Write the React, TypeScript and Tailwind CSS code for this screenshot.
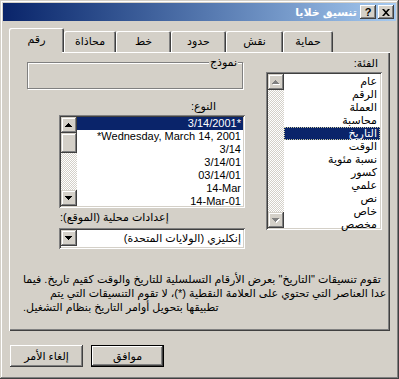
import React from "react";

function W({ t }: { t: string }) {
  const words = t.split(" ");
  return (
    <>
      {words.map((w, i) => (
        <React.Fragment key={i}>
          {i > 0 && " "}
          <span>{w}</span>
        </React.Fragment>
      ))}
    </>
  );
}

const raised =
  "shadow-[inset_-1px_-1px_#404040,inset_1px_1px_#d4d0c8,inset_-2px_-2px_#808080,inset_2px_2px_#ffffff]";
const btnRaised =
  "shadow-[inset_-1px_-1px_#404040,inset_1px_1px_#ffffff,inset_-2px_-2px_#808080,inset_2px_2px_#d4d0c8]";
const sunken =
  "shadow-[inset_1px_1px_#808080,inset_-1px_-1px_#ffffff,inset_2px_2px_#404040,inset_-2px_-2px_#d4d0c8]";
const dither =
  "bg-[repeating-conic-gradient(#d4d0c8_0%_25%,#ffffff_0%_50%)] bg-[length:2px_2px]";

function Arrow({ dir, disabled }: { dir: "up" | "down"; disabled?: boolean }) {
  const rows = dir === "up" ? [[3, 1], [2, 3], [1, 5], [0, 7]] : [[0, 7], [1, 5], [2, 3], [3, 1]];
  const shape = (fill: string, dx: number, dy: number) =>
    rows.map(([x, w], i) => <rect key={fill + i} x={x + dx} y={i + dy} width={w} height={1} fill={fill} />);
  return (
    <svg width="8" height="5" viewBox="0 0 8 5">
      {disabled && shape("#ffffff", 1, 1)}
      {shape(disabled ? "#808080" : "#000000", 0, 0)}
    </svg>
  );
}

function ScrollBtn({ dir, disabled }: { dir: "up" | "down"; disabled?: boolean }) {
  return (
    <div className={`w-[16px] h-[16px] shrink-0 bg-[#d4d0c8] flex items-center justify-center ${raised}`}>
      <Arrow dir={dir} disabled={disabled} />
    </div>
  );
}

function Tab({ label, w, selected }: { label: string; w: string; selected?: boolean }) {
  return (
    <div
      dir="rtl"
      className={`relative ${w} ${selected ? "h-[24px] pt-[5px]" : "h-[21px] pt-[4px]"} rounded-t-[2px] bg-[#d4d0c8] text-center leading-[13px] shadow-[inset_1px_1px_#ffffff,inset_-1px_0_#404040,inset_-2px_0_#808080]`}
    >
      {label}
      {selected && <div className="absolute left-[1px] right-[2px] -bottom-[2px] h-[3px] bg-[#d4d0c8]" />}
    </div>
  );
}

export default function App() {
  const cats = ["عام", "الرقم", "العملة", "محاسبة", "التاريخ", "الوقت", "نسبة مئوية", "كسور", "علمي", "نص", "خاص", "مخصص"];
  const types = ["3/14/2001*", "*Wednesday, March 14, 2001", "3/14", "3/14/01", "03/14/01", "14-Mar", "14-Mar-01"];

  return (
    <div
      className={`w-[399px] h-[379px] bg-[#d4d0c8] p-[3px] flex flex-col text-[11px] text-black font-['Liberation_Sans','DejaVu_Sans',sans-serif] ${raised}`}
    >
      {/* title bar */}
      <div className="h-[18px] shrink-0 flex items-center justify-end pr-[2px] bg-linear-to-r from-[#0a246a] to-[#a6caf0]">
        <span dir="rtl" className="text-white font-bold text-[11px] leading-[14px] mr-[3px]">
          <W t="تنسيق خلايا" />
        </span>
        <div className={`w-[16px] h-[14px] bg-[#d4d0c8] flex items-center justify-center font-bold text-[11px] leading-[11px] ${btnRaised}`}>
          ?
        </div>
        <div className={`w-[16px] h-[14px] ml-[2px] bg-[#d4d0c8] flex items-center justify-center ${btnRaised}`}>
          <svg width="8" height="7" viewBox="0 0 8 7">
            <path d="M0 0h2l2 2.3L6 0h2L5 3.5 8 7H6L4 4.7 2 7H0l3-3.5z" fill="#000" />
          </svg>
        </div>
      </div>

      {/* tabs + panel */}
      <div className="mx-[6px] mt-[7px]">
        <div className="relative z-10 flex items-end h-[24px]">
          <Tab label="رقم" w="w-[55px]" selected />
          <Tab label="محاذاة" w="w-[52px]" />
          <Tab label="خط" w="w-[55px]" />
          <Tab label="حدود" w="w-[55px]" />
          <Tab label="نقش" w="w-[57px]" />
          <Tab label="حماية" w="w-[50px]" />
        </div>
        <div className="relative h-[279px] shadow-[inset_1px_1px_#ffffff,inset_-1px_-1px_#404040,inset_-2px_-2px_#808080]">
          <div className="flex pt-[5px]">
            {/* left column */}
            <div className="ml-[18px] w-[218px] flex flex-col">
              <div className="relative mt-[5px] h-[27px] w-[216px] border border-[#808080] shadow-[inset_1px_1px_#ffffff,1px_1px_#ffffff]">
                <span dir="rtl" className="absolute -top-[7px] right-[4px] bg-[#d4d0c8] px-[1px] leading-[13px]">
                  نموذج
                </span>
              </div>
              <div dir="rtl" className="mt-[11px] h-[12px] leading-[12px] self-end mr-[29px]">
                النوع:
              </div>
              <div className={`mt-[3px] ml-[32px] w-[186px] h-[93px] bg-white p-[2px] flex ${sunken}`}>
                <div className={`w-[16px] h-full flex flex-col ${dither}`}>
                  <ScrollBtn dir="up" />
                  <div className={`w-[16px] h-[20px] bg-[#d4d0c8] ${raised}`} />
                  <div className="flex-1" />
                  <ScrollBtn dir="down" />
                </div>
                <div className="flex-1 flex flex-col">
                  {types.map((t, i) => (
                    <div
                      key={t}
                      className={`h-[13px] leading-[13px] text-right pr-[2px] whitespace-nowrap ${i === 0 ? "bg-[#0a246a] text-white" : ""}`}
                    >
                      <W t={t} />
                    </div>
                  ))}
                </div>
              </div>
              <div className="mt-[3px] ml-[33px] h-[12px] leading-[12px] whitespace-nowrap flex">
                <span dir="rtl">
                  <W t="إعدادات محلية (الموقع):" />
                </span>
              </div>
              <div className={`mt-[5px] ml-[32px] w-[186px] h-[21px] bg-white p-[2px] flex items-stretch ${sunken}`}>
                <ScrollBtn dir="down" />
                <div dir="rtl" className="flex-1 text-right pr-[2px] leading-[17px] whitespace-nowrap">
                  <W t="إنكليزي (الولايات المتحدة)" />
                </div>
              </div>
            </div>

            {/* right column */}
            <div className="ml-[21px] w-[116px] flex flex-col">
              <div dir="rtl" className="h-[12px] leading-[12px] text-right pr-[4px]">
                الفئة:
              </div>
              <div className={`mt-[3px] h-[158px] bg-white p-[2px] flex ${sunken}`}>
                <div className={`w-[16px] h-full flex flex-col justify-between ${dither}`}>
                  <ScrollBtn dir="up" disabled />
                  <ScrollBtn dir="down" disabled />
                </div>
                <div className="flex-1 flex flex-col pt-[1px]">
                  {cats.map((c, i) => (
                    <div
                      key={c}
                      dir="rtl"
                      className={`h-[13px] leading-[11px] text-right pr-[2px] whitespace-nowrap ${
                        i === 4 ? "bg-[#0a246a] text-white border border-dotted border-[#c8c8a0]" : "border border-transparent"
                      }`}
                    >
                      <W t={c} />
                    </div>
                  ))}
                </div>
              </div>
            </div>
          </div>

          {/* description */}
          <div className="mt-[23px] flex flex-col items-start leading-[14px] whitespace-nowrap">
            <div dir="rtl" className="ml-[14px]">
              <W t={'تقوم تنسيقات "التاريخ" بعرض الأرقام التسلسلية للتاريخ والوقت كقيم تاريخ. فيما'} />
            </div>
            <div dir="rtl" className="ml-[41px]">
              <W t="عدا العناصر التي تحتوي على العلامة النقطية (*)، لا تقوم التنسيقات التي يتم" />
            </div>
            <div dir="rtl" className="ml-[14px]">
              <W t="تطبيقها بتحويل أوامر التاريخ بنظام التشغيل." />
            </div>
          </div>
        </div>
      </div>

      {/* buttons */}
      <div className="flex gap-[8px] mt-[14px] ml-[7px]">
        <div dir="rtl" className={`w-[73px] h-[22px] flex items-center justify-center bg-[#d4d0c8] ${btnRaised}`}>
          <span>
            <W t="إلغاء الأمر" />
          </span>
        </div>
        <div className="w-[73px] h-[22px] border border-black">
          <div dir="rtl" className={`w-full h-full flex items-center justify-center bg-[#d4d0c8] ${btnRaised}`}>
            موافق
          </div>
        </div>
      </div>
    </div>
  );
}
